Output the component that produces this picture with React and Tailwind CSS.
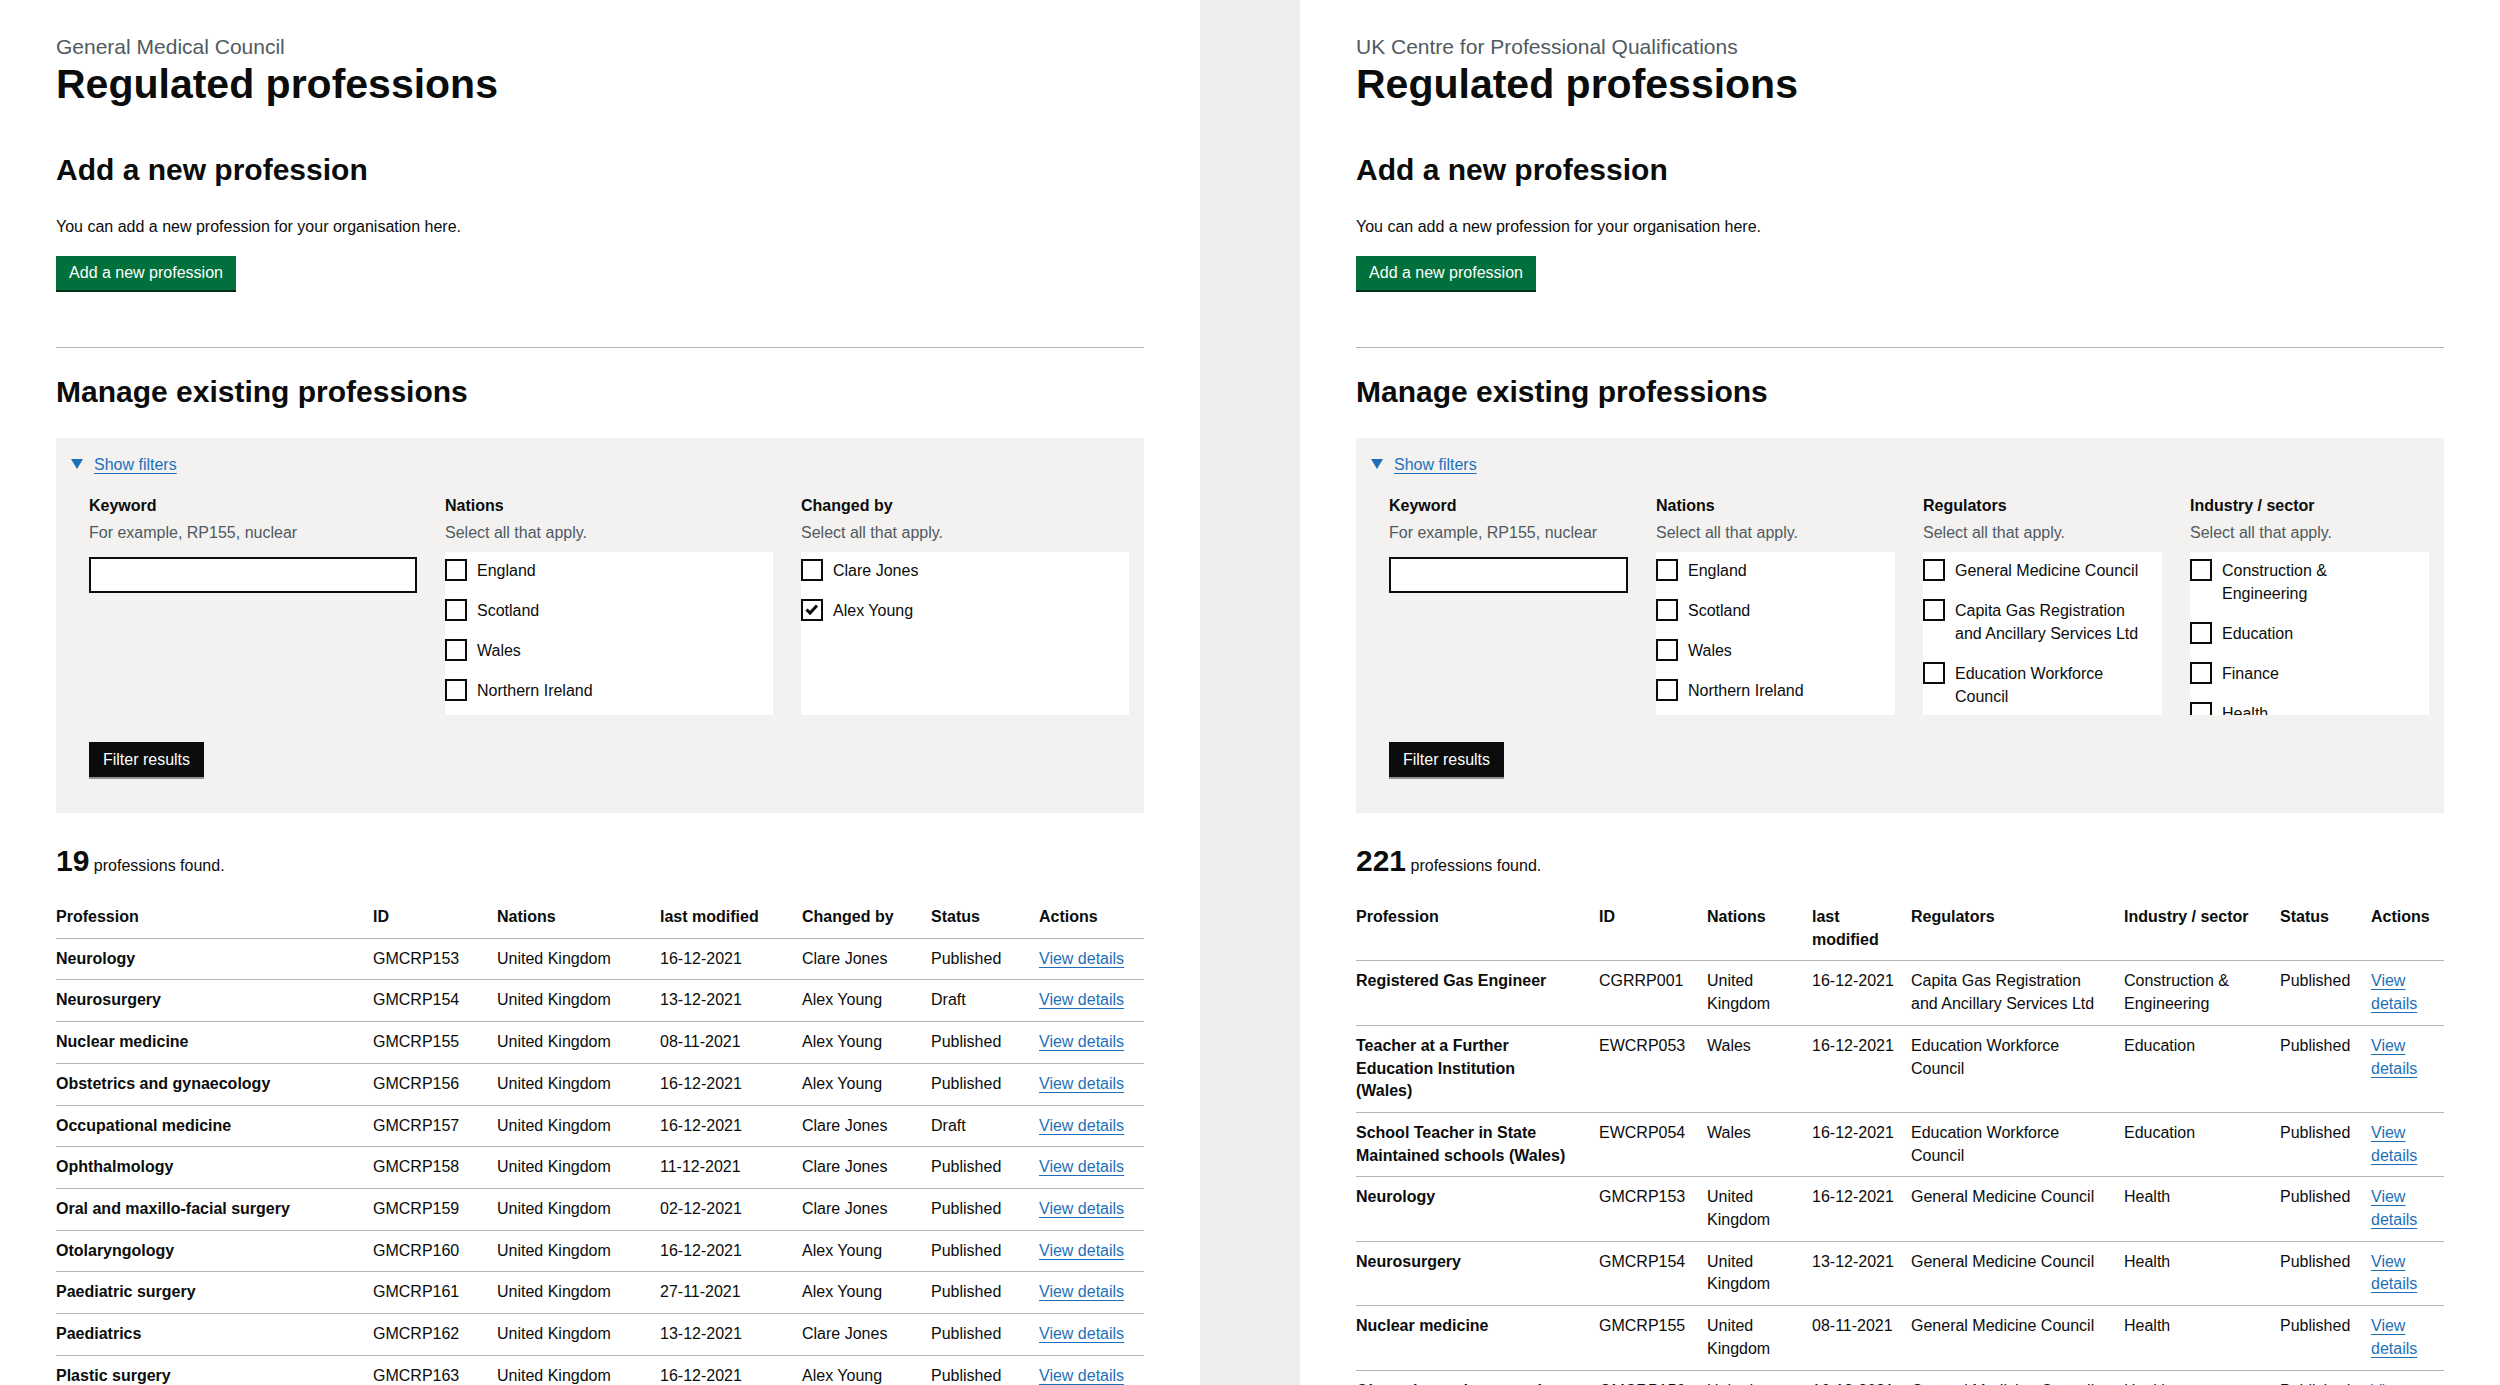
import React from "react"

const gmc = {
  org: "General Medical Council",
  count: "19",
  grid: "grid-cols-3",
  filters: [
    { title: "Keyword", hint: "For example, RP155, nuclear", input: true },
    { title: "Nations", hint: "Select all that apply.", items: ["England", "Scotland", "Wales", "Northern Ireland"] },
    { title: "Changed by", hint: "Select all that apply.", items: ["Clare Jones", "Alex Young"], checked: ["Alex Young"] },
  ],
  headers: ["Profession", "ID", "Nations", "last modified", "Changed by", "Status", "Actions"],
  widths: ["w-[317px]", "w-[124px]", "w-[163px]", "w-[142px]", "w-[129px]", "w-[108px]", "w-[105px]"],
  rows: [
    ["Neurology", "GMCRP153", "United Kingdom", "16-12-2021", "Clare Jones", "Published", "View details"],
    ["Neurosurgery", "GMCRP154", "United Kingdom", "13-12-2021", "Alex Young", "Draft", "View details"],
    ["Nuclear medicine", "GMCRP155", "United Kingdom", "08-11-2021", "Alex Young", "Published", "View details"],
    ["Obstetrics and gynaecology", "GMCRP156", "United Kingdom", "16-12-2021", "Alex Young", "Published", "View details"],
    ["Occupational medicine", "GMCRP157", "United Kingdom", "16-12-2021", "Clare Jones", "Draft", "View details"],
    ["Ophthalmology", "GMCRP158", "United Kingdom", "11-12-2021", "Clare Jones", "Published", "View details"],
    ["Oral and maxillo-facial surgery", "GMCRP159", "United Kingdom", "02-12-2021", "Clare Jones", "Published", "View details"],
    ["Otolaryngology", "GMCRP160", "United Kingdom", "16-12-2021", "Alex Young", "Published", "View details"],
    ["Paediatric surgery", "GMCRP161", "United Kingdom", "27-11-2021", "Alex Young", "Published", "View details"],
    ["Paediatrics", "GMCRP162", "United Kingdom", "13-12-2021", "Clare Jones", "Published", "View details"],
    ["Plastic surgery", "GMCRP163", "United Kingdom", "16-12-2021", "Alex Young", "Published", "View details"],
  ],
}

const cpq = {
  org: "UK Centre for Professional Qualifications",
  count: "221",
  grid: "grid-cols-4",
  filters: [
    { title: "Keyword", hint: "For example, RP155, nuclear", input: true },
    { title: "Nations", hint: "Select all that apply.", items: ["England", "Scotland", "Wales", "Northern Ireland"] },
    {
      title: "Regulators",
      hint: "Select all that apply.",
      items: ["General Medicine Council", "Capita Gas Registration\nand Ancillary Services Ltd", "Education Workforce\nCouncil"],
    },
    {
      title: "Industry / sector",
      hint: "Select all that apply.",
      items: ["Construction &\nEngineering", "Education", "Finance", "Health"],
    },
  ],
  headers: ["Profession", "ID", "Nations", "last\nmodified", "Regulators", "Industry / sector", "Status", "Actions"],
  widths: ["w-[243px]", "w-[108px]", "w-[105px]", "w-[99px]", "w-[213px]", "w-[156px]", "w-[91px]", "w-[73px]"],
  rows: [
    ["Registered Gas Engineer", "CGRRP001", "United\nKingdom", "16-12-2021", "Capita Gas Registration\nand Ancillary Services Ltd", "Construction &\nEngineering", "Published", "View\ndetails"],
    ["Teacher at a Further\nEducation Institution\n(Wales)", "EWCRP053", "Wales", "16-12-2021", "Education Workforce\nCouncil", "Education", "Published", "View\ndetails"],
    ["School Teacher in State\nMaintained schools (Wales)", "EWCRP054", "Wales", "16-12-2021", "Education Workforce\nCouncil", "Education", "Published", "View\ndetails"],
    ["Neurology", "GMCRP153", "United\nKingdom", "16-12-2021", "General Medicine Council", "Health", "Published", "View\ndetails"],
    ["Neurosurgery", "GMCRP154", "United\nKingdom", "13-12-2021", "General Medicine Council", "Health", "Published", "View\ndetails"],
    ["Nuclear medicine", "GMCRP155", "United\nKingdom", "08-11-2021", "General Medicine Council", "Health", "Published", "View\ndetails"],
    ["Obstetrics and gynaecology", "GMCRP156", "United\nKingdom", "16-12-2021", "General Medicine Council", "Health", "Published", "View\ndetails"],
  ],
}

function Checkbox({ checked }) {
  return (
    <span className="w-[22px] h-[22px] shrink-0 border-2 border-[#0b0c0c] bg-white flex items-center justify-center">
      {checked && (
        <svg width="18" height="18" viewBox="0 0 18 18">
          <path d="M3.5 8.5 L7 12 L14 4.5" fill="none" stroke="#0b0c0c" strokeWidth="3" />
        </svg>
      )}
    </span>
  )
}

function FilterColumn({ filter }) {
  return (
    <div className="flex flex-col">
      <p className="font-bold text-[16px] leading-[20px]">{filter.title}</p>
      <p className="mt-[7px] text-[16px] leading-[20px] text-[#505a5f]">{filter.hint}</p>
      {filter.input ? (
        <div className="mt-[14.5px] h-[36px] w-full border-2 border-[#0b0c0c] bg-white" />
      ) : (
        <div className="mt-[9.5px] h-[163px] bg-white overflow-hidden pt-[7px] flex flex-col gap-[17px]">
          {filter.items.map((item) => (
            <label key={item} className="flex items-start gap-[10px]">
              <Checkbox checked={filter.checked?.includes(item)} />
              <span className="text-[16px] leading-[23px] whitespace-pre-line">{item}</span>
            </label>
          ))}
        </div>
      )}
    </div>
  )
}

function Panel({ data }) {
  const last = data.headers.length - 1
  return (
    <div className="w-[1200px] shrink-0 px-[56px] bg-white text-[#0b0c0c]">
      {/* Title block */}
      <p className="pt-[34px] text-[21px] leading-[25px] text-[#505a5f]">{data.org}</p>
      <h1 className="mt-[3px] text-[41px] leading-[45px] font-bold">Regulated professions</h1>

      <h2 className="mt-[45px] text-[30px] leading-[35px] font-bold">Add a new profession</h2>
      <p className="mt-[29.5px] text-[16px] leading-[20px]">You can add a new profession for your organisation here.</p>
      <button className="mt-[19.5px] w-[180px] h-[34px] flex items-center justify-center bg-[#00703c] text-white text-[16px] leading-[20px] shadow-[0_2px_0_#002d18]">
        Add a new profession
      </button>

      <hr className="mt-[57px] border-0 h-px bg-[#b1b4b6]" />

      <h2 className="mt-[26px] text-[30px] leading-[35px] font-bold">Manage existing professions</h2>

      {/* Filters */}
      <div className="mt-[29px] bg-[#f3f2f1] pl-[15px] pr-[15px] pt-[16.5px] pb-[36px]">
        <div className="flex items-center gap-[11px]">
          <svg width="12" height="10" viewBox="0 0 12 10" className="-mt-[2px]">
            <polygon points="0,0 12,0 6,10" fill="#1d70b8" />
          </svg>
          <a className="text-[16px] leading-[20px] text-[#1d70b8] underline underline-offset-[3px] decoration-1">Show filters</a>
        </div>
        <div className="pl-[18px]">
          <div className={`mt-[21px] grid ${data.grid} gap-x-[28px]`}>
            {data.filters.map((f) => (
              <FilterColumn key={f.title} filter={f} />
            ))}
          </div>
          <button className="mt-[27px] w-[115px] h-[35px] flex items-center justify-center bg-[#0b0c0c] text-white text-[16px] leading-[20px] shadow-[0_2px_0_#929191]">
            Filter results
          </button>
        </div>
      </div>

      {/* Results */}
      <p className="mt-[30px] text-[16px] leading-[35px]">
        <span className="text-[30px] font-bold">{data.count}</span> professions found.
      </p>

      <table className="mt-[14px] w-full table-fixed border-collapse text-[16px]">
        <colgroup>
          {data.widths.map((w, i) => (
            <col key={i} className={w} />
          ))}
        </colgroup>
        <thead>
          <tr>
            {data.headers.map((h, i) => (
              <th
                key={h}
                className={`text-left align-top font-bold pt-[9px] pb-[9px] leading-[22.7px] border-b border-[#b1b4b6] whitespace-pre ${i === last ? "pr-0" : "pr-[20px]"}`}
              >
                {h}
              </th>
            ))}
          </tr>
        </thead>
        <tbody>
          {data.rows.map((row) => (
            <tr key={row[1]}>
              {row.map((cell, i) => (
                <td
                  key={i}
                  className={`align-top pt-[9px] pb-[9px] leading-[22.7px] border-b border-[#b1b4b6] whitespace-pre ${i === 0 ? "font-bold" : ""} ${i === last ? "pr-0" : "pr-[20px]"}`}
                >
                  {i === last ? (
                    <a className="text-[#1d70b8] underline underline-offset-[3px] decoration-1">{cell}</a>
                  ) : (
                    cell
                  )}
                </td>
              ))}
            </tr>
          ))}
        </tbody>
      </table>
    </div>
  )
}

export default function App() {
  return (
    <div className="w-[2500px] h-[1385px] overflow-hidden flex bg-white font-['Liberation_Sans',Arial,sans-serif]">
      <Panel data={gmc} />
      <div className="w-[100px] shrink-0 bg-[#eeeeee]" />
      <Panel data={cpq} />
    </div>
  )
}
